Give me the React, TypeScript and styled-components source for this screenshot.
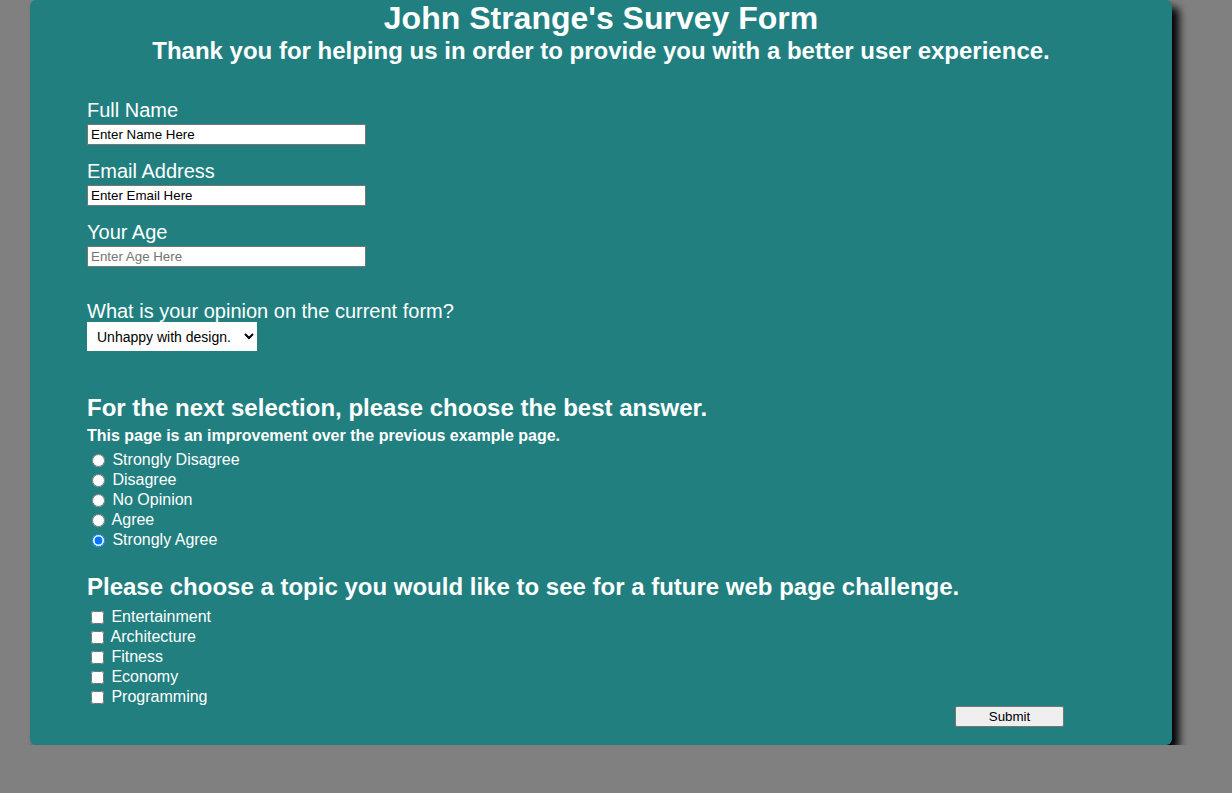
import React from "react";
import styled, { createGlobalStyle } from "styled-components";

const Global = createGlobalStyle`
  html, body { margin: 0; padding: 0; background: #808080; }
  body { font-family: "Liberation Sans", Arial, sans-serif; }
`;

const Card = styled.main`
  margin-left: 30px;
  width: 1142px;
  box-sizing: border-box;
  background: #21807f;
  color: #fff;
  border-radius: 6px;
  box-shadow: 7px 7px 9px #000;
  padding: 0 57px 18px;
`;

const Title = styled.h1`
  margin: 0;
  font-size: 32px;
  font-weight: bold;
  text-align: center;
`;

const Subtitle = styled.p`
  margin: 0;
  font-size: 24px;
  font-weight: bold;
  text-align: center;
`;

const Form = styled.form`
  display: flex;
  flex-direction: column;
  margin-top: 34px;
`;

const Field = styled.div<{ $gap?: number }>`
  display: flex;
  flex-direction: column;
  align-items: flex-start;
  margin-bottom: ${(p) => p.$gap ?? 15}px;
`;

const Label = styled.label<{ $space?: number }>`
  font-size: 20px;
  line-height: 23px;
  margin-bottom: ${(p) => p.$space ?? 2}px;
`;

const TextInput = styled.input`
  box-sizing: border-box;
  width: 279px;
  height: 21px;
  margin: 0;
  padding: 1px 3px;
  border: 1px solid #767676;
  background: #fff;
  font-family: "Liberation Sans", Arial, sans-serif;
  font-size: 13.33px;
  color: #000;
  &::placeholder { color: #757575; }
`;

const Select = styled.select`
  box-sizing: border-box;
  width: 170px;
  height: 29px;
  margin: 0;
  padding: 0 4px 0 6px;
  border: none;
  border-radius: 0;
  background: #fff;
  font-family: "Liberation Sans", Arial, sans-serif;
  font-size: 14px;
  color: #000;
`;

const Heading = styled.h2`
  margin: 0;
  font-size: 24px;
  font-weight: bold;
  line-height: 28px;
`;

const Question = styled.p`
  margin: 5px 0 5px;
  font-size: 16px;
  font-weight: bold;
  line-height: 18px;
`;

const Spacer = styled.div<{ $h: number }>`
  height: ${(p) => p.$h}px;
`;

const OptionRow = styled.label`
  display: flex;
  align-items: center;
  height: 20px;
  font-size: 16px;
  white-space: pre;
`;

const Radio = styled.input.attrs({ type: "radio" })`
  width: 13px;
  height: 13px;
  margin: 0 3px 0 5px;
`;

const Check = styled.input.attrs({ type: "checkbox" })`
  width: 13px;
  height: 13px;
  margin: 0 3px 0 4px;
`;

const Actions = styled.div`
  display: flex;
  justify-content: flex-end;
  padding-right: 51px;
  margin-top: -1px;
`;

const Submit = styled.button`
  box-sizing: border-box;
  width: 109px;
  height: 21px;
  padding: 0;
  border: 1px solid #767676;
  border-radius: 2px;
  background: #efefef;
  font-family: "Liberation Sans", Arial, sans-serif;
  font-size: 13.33px;
  color: #000;
`;

const radios = ["Strongly Disagree", "Disagree", "No Opinion", "Agree", "Strongly Agree"];
const topics = ["Entertainment", "Architecture", "Fitness", "Economy", "Programming"];

export default function App() {
  return (
    <>
      <Global />
      <Card>
        <Title>John Strange's Survey Form</Title>
        <Subtitle>Thank you for helping us in order to provide you with a better user experience.</Subtitle>
        <Form onSubmit={(e) => e.preventDefault()}>
          <Field>
            <Label htmlFor="name">Full Name</Label>
            <TextInput id="name" type="text" defaultValue="Enter Name Here" />
          </Field>
          <Field>
            <Label htmlFor="email">Email Address</Label>
            <TextInput id="email" type="email" defaultValue="Enter Email Here" />
          </Field>
          <Field $gap={33}>
            <Label htmlFor="age">Your Age</Label>
            <TextInput id="age" type="number" placeholder="Enter Age Here" />
          </Field>
          <Field $gap={43}>
            <Label htmlFor="opinion" $space={-1}>What is your opinion on the current form?</Label>
            <Select id="opinion" defaultValue="unhappy">
              <option value="unhappy">Unhappy with design.</option>
              <option value="neutral">No strong feelings.</option>
              <option value="happy">Happy with design.</option>
            </Select>
          </Field>
          <Field $gap={23}>
            <Heading>For the next selection, please choose the best answer.</Heading>
            <Question>This page is an improvement over the previous example page.</Question>
            {radios.map((r, i) => (
              <OptionRow key={r}>
                <Radio name="improve" value={r} defaultChecked={i === radios.length - 1} />
                {" " + r}
              </OptionRow>
            ))}
          </Field>
          <Field $gap={0}>
            <Heading>Please choose a topic you would like to see for a future web page challenge.</Heading>
            <Spacer $h={6} />
            {topics.map((t) => (
              <OptionRow key={t}>
                <Check value={t} />
                {" " + t}
              </OptionRow>
            ))}
          </Field>
          <Actions>
            <Submit type="submit">Submit</Submit>
          </Actions>
        </Form>
      </Card>
    </>
  );
}
